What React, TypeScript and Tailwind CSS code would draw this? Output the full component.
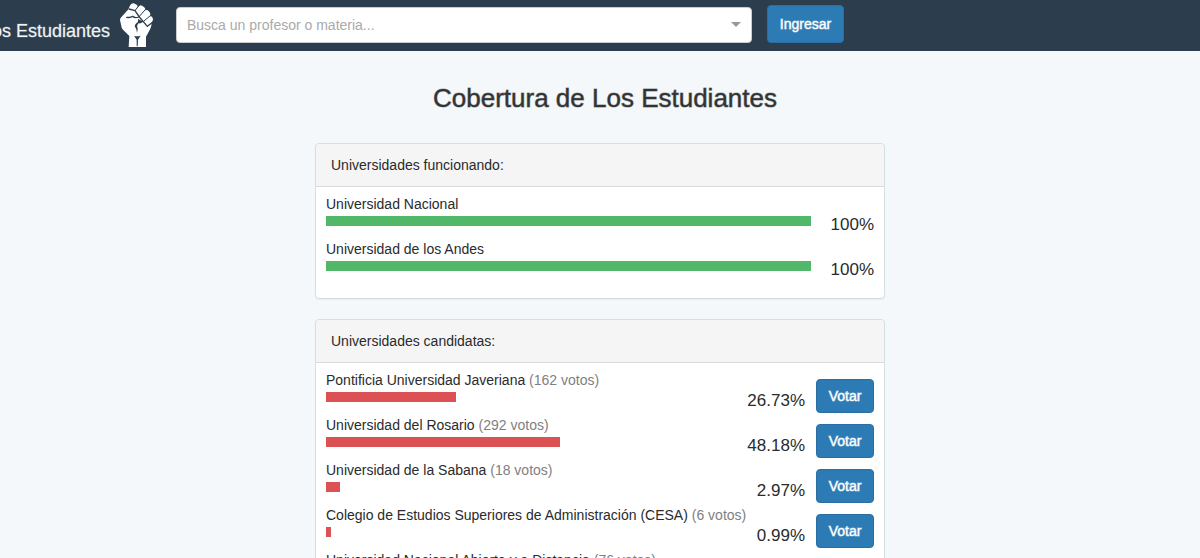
import React from "react";

type Candidate = { name: string; votes: number; percent: number };

const active = ["Universidad Nacional", "Universidad de los Andes"];

const candidates: Candidate[] = [
  { name: "Pontificia Universidad Javeriana", votes: 162, percent: 26.73 },
  { name: "Universidad del Rosario", votes: 292, percent: 48.18 },
  { name: "Universidad de la Sabana", votes: 18, percent: 2.97 },
  { name: "Colegio de Estudios Superiores de Administración (CESA)", votes: 6, percent: 0.99 },
  { name: "Universidad Nacional Abierta y a Distancia", votes: 76, percent: 12.54 },
];

function FistLogo() {
  return (
    <svg viewBox="0 0 102 132" className="mb-[2px] h-11 w-[34px] shrink-0" aria-hidden="true">
      <path
        fill="#fff"
        d="M31 6 Q35 0 41 1 L50 5 Q54 8 53 13 L58 9 Q62 5 66 8 L73 13 Q77 17 75 22 Q81 19 85 23 L90 29 Q92 33 90 40 Q94 38 97 43 L99 49 Q99 53 95 58 L94 68 L91 77 L78 101 L78 132 L26 132 L28 99 L9 80 Q4 74 3 65 L0 51 Q0 45 5 41 L24 20 Z"
      />
      <g fill="none" stroke="#2c3e4e" strokeWidth="4" strokeLinecap="round" strokeLinejoin="round">
        <path d="M27 18 L45 23 L58 42 L82 70 L95 60" />
        <path d="M45 23 L54 11" strokeWidth="3" />
        <path d="M58 40 L75 21" strokeWidth="3" />
        <path d="M72 54 L91 38" strokeWidth="3" />
        <path d="M20 43 Q32 45 38 40 Q45 47 56 42" />
      </g>
      <path fill="#2c3e4e" d="M54 48 L70 56 Q62 62 55 61 L51 69 Q56 79 51 89 Q50 77 44 70 Q46 61 54 56 Z" />
      <path fill="#2c3e4e" d="M42 98 Q52 102 62 98 L54 110 L53 130 L50 130 L50 110 Z" />
    </svg>
  );
}

function Panel({ title, children }: { title: string; children: React.ReactNode }) {
  return (
    <section className="mb-5 rounded border border-[#d3e0e0] bg-white shadow-[0_1px_1px_rgba(0,0,0,0.05)]">
      <h2 className="rounded-t border-b border-[#d9dcdc] bg-[#f5f5f5] px-[15px] py-[11px] text-sm leading-5">
        {title}
      </h2>
      <ul className="px-[10px] pt-[7px] pb-[14px]">{children}</ul>
    </section>
  );
}

function Row({
  name,
  votes,
  percent,
  color,
  children,
}: {
  name: string;
  votes?: number;
  percent: number;
  color: string;
  children?: React.ReactNode;
}) {
  return (
    <li className="grid h-[45px]">
      <div className="col-start-1 row-start-1 pr-[63px]">
        <p className="text-sm leading-5 whitespace-nowrap">
          {name}
          {votes !== undefined && <span className="text-[#808080]"> ({votes} votos)</span>}
        </p>
        <div className="mt-[2px]">
          <div className={`h-[10px] ${color}`} style={{ width: `${percent}%` }} />
        </div>
      </div>
      <div className="col-start-1 row-start-1 flex justify-end gap-[11px]">
        <span className="pt-[19px] text-[17px] leading-6">{percent}%</span>
        {children}
      </div>
    </li>
  );
}

export default function App() {
  return (
    <div className="min-h-screen bg-[#f4f8fb] font-['Liberation_Sans',Arial,sans-serif] text-[#292b2c]">
      <header className="flex h-[51px] items-center bg-[#2c3e4e]">
        <a href="#" className="flex shrink-0 items-center gap-[10px] text-lg text-[#f2f5f7]">
          <span className="flex w-[110px] justify-end overflow-hidden pt-[10px] whitespace-nowrap [-webkit-text-stroke:1px_#f2f5f740]">
            Los Estudiantes
          </span>
          <FistLogo />
        </a>
        <div className="mb-[2px] ml-[22px] flex h-9 w-[48%] items-center rounded border border-[#ccc] bg-white px-[10px]">
          <input
            type="text"
            role="combobox"
            aria-expanded="false"
            aria-label="Busca un profesor o materia"
            placeholder="Busca un profesor o materia..."
            className="min-w-0 flex-1 bg-transparent text-sm outline-none placeholder:text-[#aaa]"
          />
          <svg viewBox="0 0 10 5" className="h-[5px] w-[10px]" aria-hidden="true">
            <path d="M0 0H10L5 5Z" fill="#999" />
          </svg>
        </div>
        <button
          type="button"
          className="mb-[3px] ml-[15px] h-[38px] min-w-[77px] rounded border border-[#2a6ea5] bg-[#2d7bb5] px-[11px] text-sm text-white [-webkit-text-stroke:1px_#ffffff80]"
        >
          Ingresar
        </button>
      </header>
      <main className="mx-auto max-w-[570px]">
        <h1 className="pt-8 pb-[30px] pl-[10px] text-center text-[26px] leading-[30px] text-[#333] [-webkit-text-stroke:1px_#33333380]">
          Cobertura de Los Estudiantes
        </h1>
        <Panel title="Universidades funcionando:">
          {active.map((name) => (
            <Row key={name} name={name} percent={100} color="bg-[#53b76a]" />
          ))}
        </Panel>
        <Panel title="Universidades candidatas:">
          {candidates.map((c) => (
            <Row key={c.name} {...c} color="bg-[#dc5153]">
              <button
                type="button"
                aria-label={`Votar por ${c.name}`}
                className="mt-[9px] h-[34px] min-w-[58px] rounded border border-[#2a6ea5] bg-[#2d7bb5] px-[11px] text-sm text-white [-webkit-text-stroke:1px_#ffffff80]"
              >
                Votar
              </button>
            </Row>
          ))}
        </Panel>
      </main>
    </div>
  );
}
